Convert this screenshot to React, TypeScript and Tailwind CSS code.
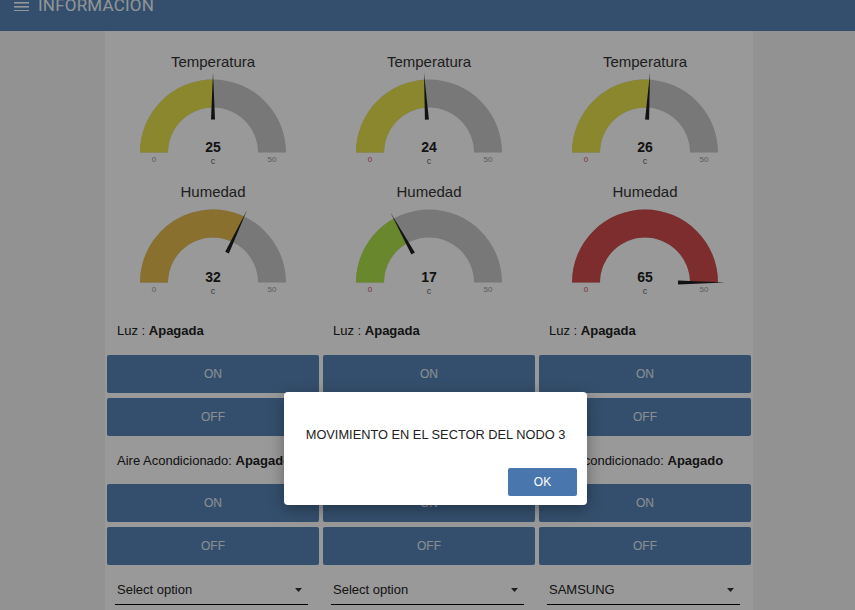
import React from 'react';

type GaugeProps = { title: string; value: number; color: string; zeroColor?: string };

const CX = 106;
const CY = 81.5;
const R = 73;
const RI = 45;

const pt = (r: number, a: number) => [CX + r * Math.cos(a), CY - r * Math.sin(a)];

function arcPath(a: number) {
  const [x1, y1] = pt(R, Math.PI);
  const [x2, y2] = pt(R, a);
  const [x3, y3] = pt(RI, a);
  const [x4, y4] = pt(RI, Math.PI);
  return `M${x1} ${y1} A${R} ${R} 0 0 1 ${x2} ${y2} L${x3} ${y3} A${RI} ${RI} 0 0 0 ${x4} ${y4} Z`;
}

function Gauge({ title, value, color, zeroColor = '#9a9a9a' }: GaugeProps) {
  const clamped = Math.min(Math.max(value, 0), 50);
  const a = Math.PI * (1 - clamped / 50);
  const [tx, ty] = pt(80, a);
  const [bx, by] = pt(33, a);
  const px = 2 * Math.sin(a);
  const py = 2 * Math.cos(a);
  return (
    <div className="flex flex-col items-center">
      <div className="h-[20px] text-[15px] leading-[22px] text-[#333]">{title}</div>
      <svg width="212" height="100" viewBox="0 0 212 100" className="block">
        <path d={arcPath(0)} fill="#c8c8c8" />
        <path d={arcPath(a)} fill={color} />
        <polygon
          points={`${tx},${ty} ${bx + px},${by + py} ${bx - px},${by - py}`}
          fill="#1e1e1e"
        />
        <text x={CX} y="80.7" textAnchor="middle" fontSize="14" fontWeight="bold" fill="#222">
          {value}
        </text>
        <text x={CX} y="93" textAnchor="middle" fontSize="9" fill="#666">
          c
        </text>
        <text x={CX - 59} y="90.7" textAnchor="middle" fontSize="8" fill={zeroColor}>
          0
        </text>
        <text x={CX + 59} y="90.7" textAnchor="middle" fontSize="8" fill="#9a9a9a">
          50
        </text>
      </svg>
    </div>
  );
}

function Btn({ label, className = '' }: { label: string; className?: string }) {
  return (
    <button
      className={`h-[38px] w-full rounded-[2px] bg-[#5884b6] text-[12px] uppercase text-white/85 ${className}`}
    >
      {label}
    </button>
  );
}

type Node = {
  temp: number;
  tempColor: string;
  hum: number;
  humColor: string;
  zero: string;
  select: string;
};

const nodes: Node[] = [
  { temp: 25, tempColor: '#e6e24f', hum: 32, humColor: '#e4bb4f', zero: '#9a9a9a', select: 'Select option' },
  { temp: 24, tempColor: '#e6e24f', hum: 17, humColor: '#b0e34c', zero: '#d05050', select: 'Select option' },
  { temp: 26, tempColor: '#e6e24f', hum: 65, humColor: '#d04c4c', zero: '#d05050', select: 'SAMSUNG' },
];

function Column({ n }: { n: Node }) {
  return (
    <div className="flex flex-col pt-[20px]">
      <Gauge title="Temperatura" value={n.temp} color={n.tempColor} zeroColor={n.zero} />
      <div className="mt-[10px]">
        <Gauge title="Humedad" value={n.hum} color={n.humColor} zeroColor={n.zero} />
      </div>
      <div className="mt-[20px] px-[10px] text-[13px] leading-[20px] text-[#222]">
        Luz : <span className="font-bold">Apagada</span>
      </div>
      <Btn label="On" className="mt-[14px]" />
      <Btn label="Off" className="mt-[5px]" />
      <div className="mt-[15px] whitespace-nowrap px-[10px] text-[13px] leading-[20px] text-[#222]">
        Aire Acondicionado: <span className="font-bold">Apagado</span>
      </div>
      <Btn label="On" className="mt-[13px]" />
      <Btn label="Off" className="mt-[5px]" />
      <div className="mx-[8px] mt-[15px] flex w-[193px] items-center justify-between border-b border-black pb-[4px] pl-[2px] pr-[6px] text-[13px] leading-[20px] text-[#222]">
        <span>{n.select}</span>
        <svg width="7" height="4" viewBox="0 0 7 4">
          <path d="M0 0 L7 0 L3.5 4 Z" fill="#333" />
        </svg>
      </div>
    </div>
  );
}

export default function App() {
  return (
    <div
      className="relative h-[610px] overflow-hidden bg-[#f4f4f4]"
      style={{ fontFamily: '"Liberation Sans", Arial, sans-serif' }}
    >
      <header className="flex h-[31px] items-start bg-[#5884b6] pl-[14px] text-white/95">
        <svg width="15" height="12" viewBox="0 0 15 12" className="mt-[-1px]">
          <rect x="0" y="3" width="15" height="1.6" fill="currentColor" />
          <rect x="0" y="7" width="15" height="1.6" fill="currentColor" />
          <rect x="0" y="11" width="15" height="1.6" fill="currentColor" />
        </svg>
        <span
          className="ml-[9px] mt-[-3px] text-[17px] leading-[17px] tracking-[0.2px]"
          style={{ fontFamily: 'Roboto, sans-serif' }}
        >
          INFORMACION
        </span>
      </header>
      <main className="ml-[105px] grid h-[640px] w-[648px] grid-cols-[212px_212px_212px] gap-[4px] bg-white px-[2px]">
        {nodes.map((n, i) => (
          <Column key={i} n={n} />
        ))}
      </main>

      <div className="absolute inset-0 z-10 bg-black/40" />

      <div className="absolute left-[284px] top-[392px] z-20 flex h-[113px] w-[303px] flex-col rounded-[4px] bg-white shadow-[0_4px_16px_rgba(0,0,0,0.35)]">
        <div className="mt-[34px] text-center text-[12.8px] leading-[18px] text-[#222]">
          MOVIMIENTO EN EL SECTOR DEL NODO 3
        </div>
        <div className="mt-auto flex justify-end pb-[9px] pr-[10px]">
          <button className="h-[28px] w-[69px] rounded-[2px] bg-[#4a76ae] text-[12px] text-white">
            OK
          </button>
        </div>
      </div>
    </div>
  );
}
